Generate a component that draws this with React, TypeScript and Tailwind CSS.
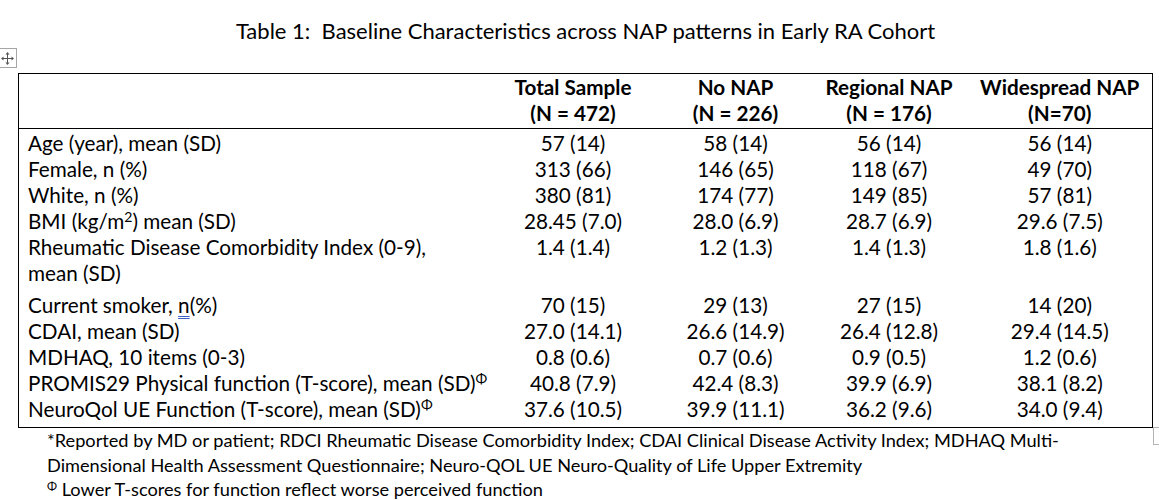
import React from "react"

const rows: { label: React.ReactNode; vals: string[]; extra?: string }[] = [
  { label: "Age (year), mean (SD)", vals: ["57 (14)", "58 (14)", "56 (14)", "56 (14)"] },
  { label: "Female, n (%)", vals: ["313 (66)", "146 (65)", "118 (67)", "49 (70)"] },
  { label: "White, n (%)", vals: ["380 (81)", "174 (77)", "149 (85)", "57 (81)"] },
  {
    label: (
      <>
        BMI (kg/m<sup className="text-[14px]">2</sup>) mean (SD)
      </>
    ),
    vals: ["28.45 (7.0)", "28.0 (6.9)", "28.7 (6.9)", "29.6 (7.5)"],
  },
  {
    label: (
      <>
        Rheumatic Disease Comorbidity Index (0-9),
        <br />
        mean (SD)
      </>
    ),
    vals: ["1.4 (1.4)", "1.2 (1.3)", "1.4 (1.3)", "1.8 (1.6)"],
    extra: "pb-[6px]",
  },
  {
    label: (
      <>
        Current smoker,{" "}
        <span className="underline decoration-double decoration-[#3b5fc8] decoration-1 underline-offset-[3px]">n</span>
        (%)
      </>
    ),
    vals: ["70 (15)", "29 (13)", "27 (15)", "14 (20)"],
  },
  { label: "CDAI, mean (SD)", vals: ["27.0 (14.1)", "26.6 (14.9)", "26.4 (12.8)", "29.4 (14.5)"] },
  { label: "MDHAQ, 10 items (0-3)", vals: ["0.8 (0.6)", "0.7 (0.6)", "0.9 (0.5)", "1.2 (0.6)"] },
  {
    label: (
      <>
        PROMIS29 Physical function (T-score), mean (SD)
        <sup className="text-[14px]">Φ</sup>
      </>
    ),
    vals: ["40.8 (7.9)", "42.4 (8.3)", "39.9 (6.9)", "38.1 (8.2)"],
  },
  {
    label: (
      <>
        NeuroQol UE Function (T-score), mean (SD)
        <sup className="text-[14px]">Φ</sup>
      </>
    ),
    vals: ["37.6 (10.5)", "39.9 (11.1)", "36.2 (9.6)", "34.0 (9.4)"],
  },
]

const heads = [
  ["Total Sample", "(N = 472)"],
  ["No NAP", "(N = 226)"],
  ["Regional NAP", "(N = 176)"],
  ["Widespread NAP", "(N=70)"],
]

export default function App() {
  return (
    <div className="relative w-[1159px] h-[500px] overflow-hidden bg-white text-black font-['Lato',sans-serif]">
      {/* Title */}
      <div className="pt-[18px] pl-[12px] text-center text-[22px] leading-[26px]">
        Table 1:&nbsp; Baseline Characteristics across NAP patterns in Early RA Cohort
      </div>

      {/* table move handle */}
      <div className="absolute left-[-2px] top-[48px] w-[19px] h-[20px] border border-[#a6a6a6] bg-white flex items-center justify-center">
        <svg width="13" height="13" viewBox="0 0 13 13" fill="#555">
          <rect x="6" y="2" width="1" height="9" />
          <rect x="2" y="6" width="9" height="1" />
          <path d="M6.5 0 L8.5 2.5 L4.5 2.5 Z" />
          <path d="M6.5 13 L8.5 10.5 L4.5 10.5 Z" />
          <path d="M0 6.5 L2.5 4.5 L2.5 8.5 Z" />
          <path d="M13 6.5 L10.5 4.5 L10.5 8.5 Z" />
        </svg>
      </div>

      {/* Table */}
      <div className="mt-[29px] ml-[18px] w-[1134px]">
        <table className="w-full table-fixed border-collapse border border-black text-[20.7px] leading-[26px]">
          <colgroup>
            <col className="w-[467px]" />
            <col className="w-[175px]" />
            <col className="w-[150px]" />
            <col className="w-[157px]" />
            <col className="w-[185px]" />
          </colgroup>
          <thead>
            <tr className="border-b border-black">
              <th className="p-0" />
              {heads.map((h) => (
                <th key={h[0]} className="p-0 pb-[2px] text-center font-bold">
                  {h[0]}
                  <br />
                  {h[1]}
                </th>
              ))}
            </tr>
          </thead>
          <tbody>
            {rows.map((r, i) => {
              const pad = `${i === 0 ? "pt-[1px]" : ""} ${r.extra ?? ""} ${i === rows.length - 1 ? "pb-[5px]" : ""}`
              return (
                <tr key={i}>
                  <td className={`p-0 pl-[9px] align-top whitespace-nowrap ${pad}`}>{r.label}</td>
                  {r.vals.map((v, j) => (
                    <td key={j} className={`p-0 text-center align-top ${pad}`}>
                      {v}
                    </td>
                  ))}
                </tr>
              )
            })}
          </tbody>
        </table>
      </div>

      {/* end-of-row marker */}
      <div className="absolute left-[1153px] top-[427px] w-[12px] h-[18px] border border-[#b4b4b4] bg-white" />

      {/* Footnotes */}
      <div className="pl-[47px] text-[18.2px] leading-[24.5px]">
        <div>
          *Reported by MD or patient; RDCI Rheumatic Disease Comorbidity Index; CDAI Clinical Disease Activity Index; MDHAQ Multi-
        </div>
        <div>Dimensional Health Assessment Questionnaire; Neuro-QOL UE Neuro-Quality of Life Upper Extremity</div>
        <div>
          <sup className="text-[12px]">Φ</sup> Lower T-scores for function reflect worse perceived function
        </div>
      </div>
    </div>
  )
}
